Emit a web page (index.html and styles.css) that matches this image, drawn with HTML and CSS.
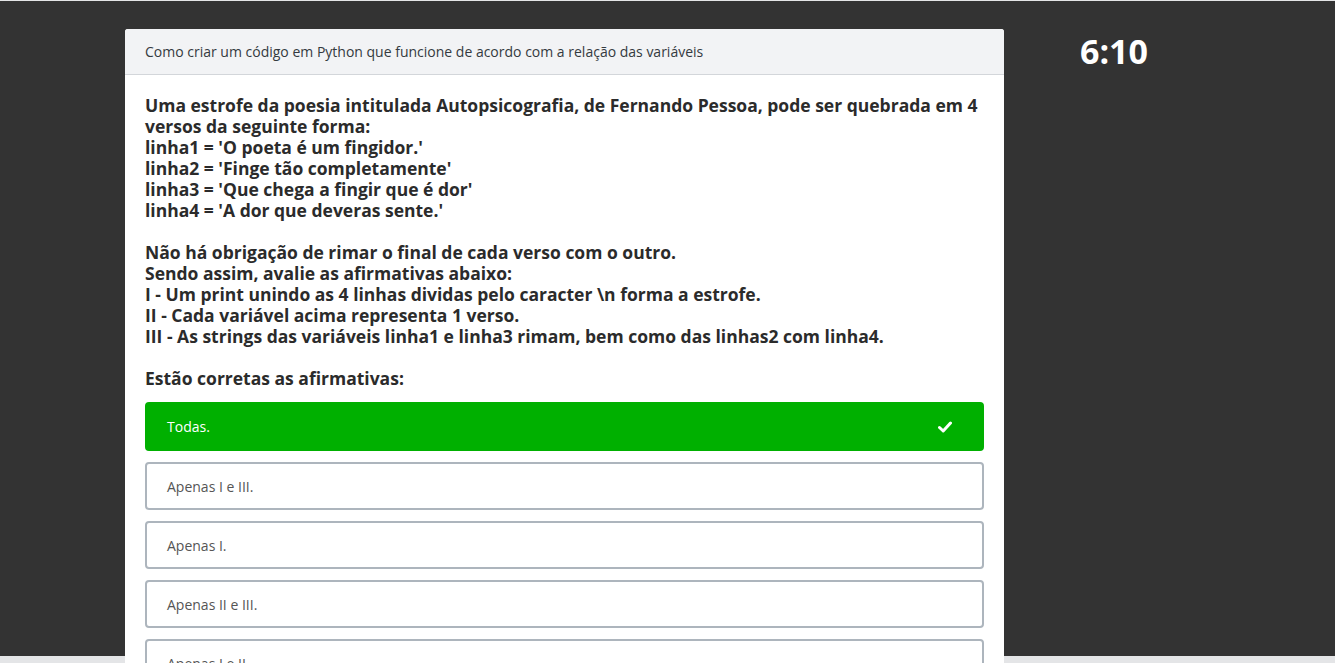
FILE: index.html
```html
<!DOCTYPE html>
<html lang="pt-BR">
<head>
<meta charset="utf-8">
<title>Questão</title>
<link rel="stylesheet" href="styles.css">
</head>
<body>
<div class="stage">
  <div class="layout">
    <main class="card">
      <header class="card-header">Como criar um código em Python que funcione de acordo com a relação das variáveis</header>
      <section class="card-body">
        <p class="question">Uma estrofe da poesia intitulada Autopsicografia, de Fernando Pessoa, pode ser quebrada em 4 versos da seguinte forma:<br>linha1 = 'O poeta é um fingidor.'<br>linha2 = 'Finge tão completamente'<br>linha3 = 'Que chega a fingir que é dor'<br>linha4 = 'A dor que deveras sente.'<br><br>Não há obrigação de rimar o final de cada verso com o outro.<br>Sendo assim, avalie as afirmativas abaixo:<br>I - Um print unindo as 4 linhas dividas pelo caracter \n forma a estrofe.<br>II - Cada variável acima representa 1 verso.<br>III - As strings das variáveis linha1 e linha3 rimam, bem como das linhas2 com linha4.<br><br>Estão corretas as afirmativas:</p>
        <ul class="options">
          <li class="option correct"><span>Todas.</span>
            <svg class="check" width="14" height="12" viewBox="0 0 14 12"><path d="M1.5 6.5 L5.2 10 L12.5 2" fill="none" stroke="#fff" stroke-width="3" stroke-linecap="round" stroke-linejoin="round"/></svg>
          </li>
          <li class="option"><span>Apenas I e III.</span></li>
          <li class="option"><span>Apenas I.</span></li>
          <li class="option"><span>Apenas II e III.</span></li>
          <li class="option"><span>Apenas I e II.</span></li>
        </ul>
      </section>
    </main>
    <aside class="timer">6:10</aside>
  </div>
</div>
</body>
</html>
```
FILE: styles.css
```css
html, body {
  margin: 0;
  padding: 0;
}
body {
  background: #e4e5e7;
  font-family: "Open Sans", "Noto Sans", sans-serif;
  overflow: hidden;
  height: 663px;
  padding-top: 1px;
  box-sizing: border-box;
}
.stage {
  background: #333333;
  height: 655px;
}
.layout {
  display: flex;
  align-items: flex-start;
  padding-left: 125px;
  padding-top: 28px;
}
.card {
  width: 879px;
  background: #ffffff;
  border-radius: 3px;
  flex-shrink: 0;
}
.card-header {
  background: #f2f3f5;
  border-bottom: 1px solid #d3d6da;
  border-radius: 3px 3px 0 0;
  height: 46px;
  box-sizing: border-box;
  padding: 13px 20px 0;
  font-size: 14px;
  line-height: 19px;
  color: #343a40;
}
.card-body {
  padding: 20px 20px 20px;
}
.question {
  margin: 0;
  font-size: 17.5px;
  line-height: 21px;
  font-weight: 700;
  color: #2b2b2b;
}
.options {
  list-style: none;
  margin: 13px 0 0;
  padding: 0;
  display: flex;
  flex-direction: column;
  gap: 11px;
}
.option {
  display: flex;
  align-items: center;
  justify-content: space-between;
  height: 48px;
  box-sizing: border-box;
  border: 2px solid #adb5bd;
  border-radius: 4px;
  padding: 0 20px;
  font-size: 14px;
  color: #555555;
}
.option.correct {
  background: #00b000;
  border-color: #00b000;
  color: #ffffff;
  height: 49px;
}
.check {
  margin-right: 10px;
}
.timer {
  width: 220px;
  text-align: center;
  color: #ffffff;
  font-weight: 700;
  font-size: 34px;
  line-height: 44px;
}
```
